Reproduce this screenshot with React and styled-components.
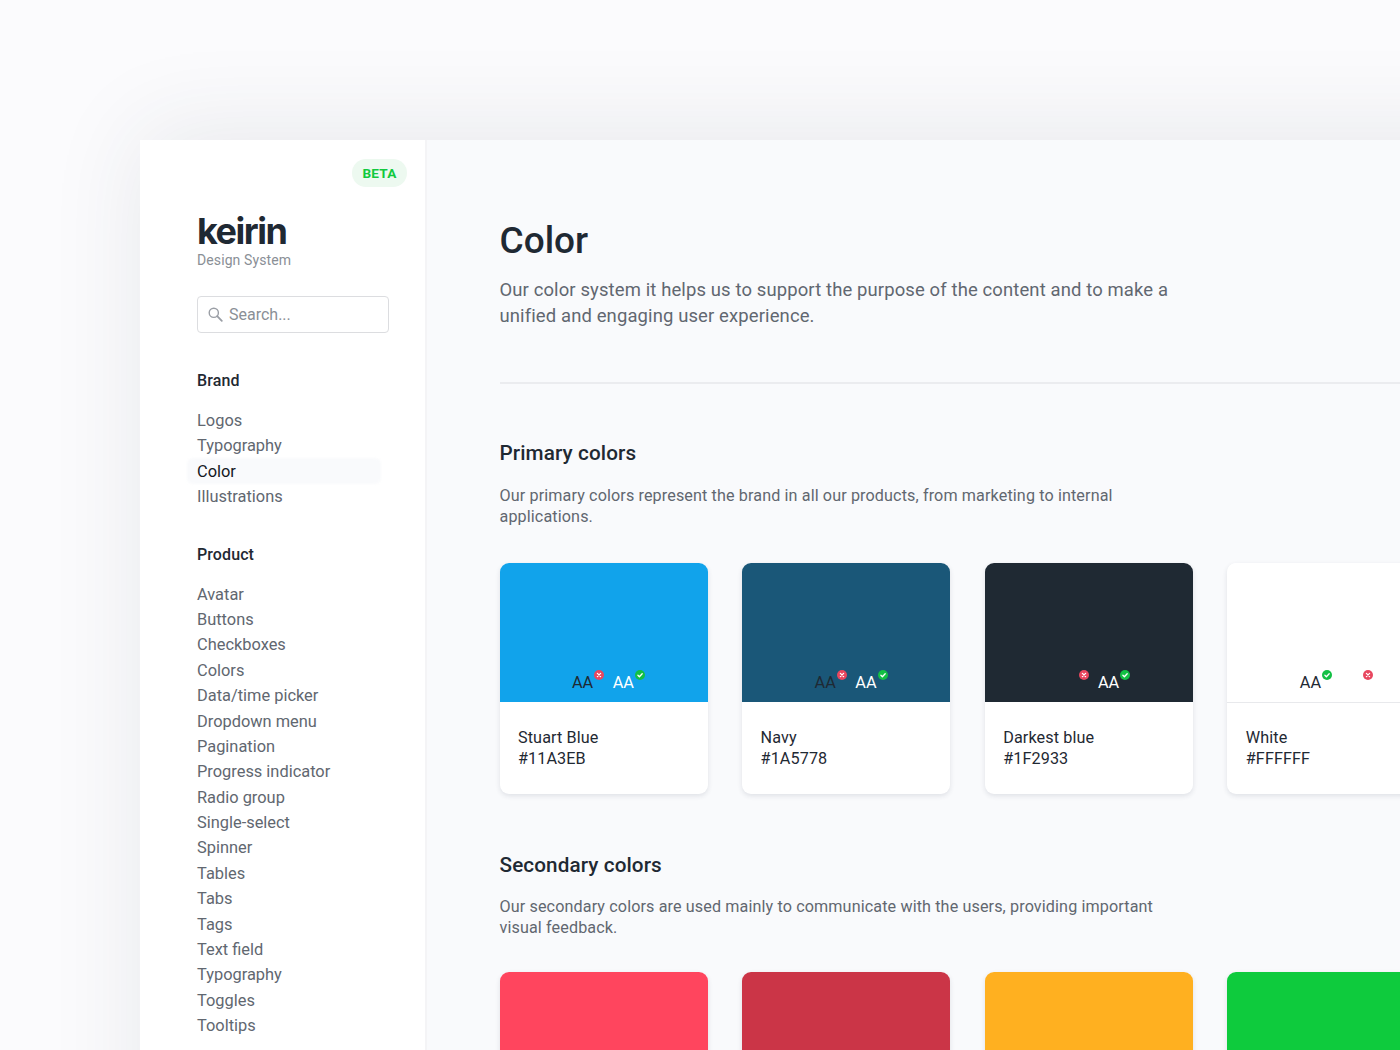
import React from "react";
import styled, { createGlobalStyle } from "styled-components";

const Global = createGlobalStyle`
  html, body { margin: 0; padding: 0; height: 100%; overflow: hidden; background: #fbfbfd; }
  * { box-sizing: border-box; }
  body { font-family: Roboto, "Liberation Sans", sans-serif; -webkit-font-smoothing: antialiased; }
`;
const Page = styled.div`
  width: 1400px; height: 1050px; overflow: hidden; padding: 140px 0 0 140px; background: #fbfbfd;
`;
const Shell = styled.div`
  display: flex; width: 1400px; height: 1200px; background: #f9fafc;
  box-shadow: 0 -10px 90px rgba(40, 50, 70, 0.09);
`;
const Sidebar = styled.aside`
  flex: 0 0 287px; display: flex; flex-direction: column; background: #fff;
  border-right: 2px solid #f4f4f6; padding: 19px 18px 0 57px;
`;
const Beta = styled.span`
  align-self: flex-end; width: 55px; height: 28px; border-radius: 14px;
  background: #edf9f0; color: #12c93f; font-size: 13.6px; font-weight: 700; letter-spacing: 0.2px;
  display: flex; align-items: center; justify-content: center;
`;
const Logo = styled.div`
  margin-top: 24px; font-family: Inter, sans-serif; font-size: 36px; line-height: 40px; font-weight: 700;
  color: #1f2933; letter-spacing: -1.5px;
`;
const Tagline = styled.div`
  font-size: 14px; line-height: 18px; color: #8a8f96; letter-spacing: 0.1px;
`;
const Search = styled.div`
  margin-top: 27px; width: 191.5px; height: 37px; flex: none; border: 1px solid #dcdde0; border-radius: 4px; background: #fff;
  display: flex; align-items: center; gap: 6px; padding-left: 10px;
  color: #8a8f96; font-size: 16px; letter-spacing: 0;
`;
const SectionTitle = styled.div`
  font-size: 16px; line-height: 20px; font-weight: 500; color: #1f2933; letter-spacing: 0.1px;
  margin-top: ${(p) => p.$top}px; margin-bottom: 17px;
`;
const NavList = styled.div`
  display: flex; flex-direction: column;
`;
const NavItem = styled.div`
  position: relative; flex: none; height: 25.4px; line-height: 25.4px; font-size: 16.4px; letter-spacing: 0;
  color: ${(p) => (p.$active ? "#14191f" : "#616770")};
  ${(p) => p.$active && `
    &::before {
      content: ""; position: absolute; left: -10px; top: -1px; width: 194px; height: 26px;
      background: #f9fafc; border-radius: 6px; z-index: 0; filter: blur(1px);
    }
  `}
`;
const NavLabel = styled.span`
  position: relative;
`;
const Main = styled.main`
  flex: 1; padding: 78px 0 0 72.5px;
`;
const Title = styled.h1`
  margin: 0; font-size: 37px; line-height: 46px; font-weight: 500; color: #1f2933;
`;
const Lead = styled.p`
  margin: 14px 0 0; width: 690px; font-size: 18.45px; line-height: 25.5px; color: #616770; letter-spacing: 0.13px;
`;
const Divider = styled.div`
  height: 2px; background: #ebecef; margin-top: 53px;
`;
const H2 = styled.h2`
  margin: ${(p) => p.$top}px 0 0; font-size: 20.7px; line-height: 28px; font-weight: 500; color: #1f2933; letter-spacing: 0.1px;
`;
const Desc = styled.p`
  margin: ${(p) => p.$top}px 0 0; width: 680px; font-size: 16.15px; line-height: 21px; color: #616770; letter-spacing: 0.12px;
`;
const Cards = styled.div`
  display: flex; gap: 34.6px; margin-top: ${(p) => p.$top}px;
`;
const Card = styled.div`
  flex: 0 0 208px; height: 231px; border-radius: 9px; background: #fff; overflow: hidden;
  box-shadow: 0 2px 5px rgba(40, 50, 70, 0.12);
`;
const Swatch = styled.div`
  display: flex; align-items: flex-end; padding: 0 0 11px 72.5px; height: 139px; background: ${(p) => p.$c};
  ${(p) => p.$line && "box-shadow: 0 1px 0 #e8e9ec;"}
`;
const Contrast = styled.div`
  flex: 0 0 40.7px; display: flex; align-items: flex-start;
  font-size: 16.3px; line-height: 17px; color: ${(p) => p.$c};
`;
const Dot = styled.svg`
  flex: none; width: 10px; height: 10px; margin: -4px 0 0 1px;
`;
const Info = styled.div`
  padding: 25px 0 0 18.5px; font-size: 16.2px; line-height: 21px; color: #1f2933; letter-spacing: 0.1px;
`;

const Cross = () => (
  <Dot viewBox="0 0 10 10">
    <circle cx="5" cy="5" r="5" fill="#e8475f" />
    <path d="M3.4 3.4l3.2 3.2M6.6 3.4L3.4 6.6" stroke="#fff" strokeWidth="1.3" strokeLinecap="round" />
  </Dot>
);
const Check = () => (
  <Dot viewBox="0 0 10 10">
    <circle cx="5" cy="5" r="5" fill="#12c044" />
    <path d="M2.9 5.2l1.5 1.5 2.8-3" stroke="#fff" strokeWidth="1.3" fill="none" strokeLinecap="round" strokeLinejoin="round" />
  </Dot>
);

const DARK = "#1f2933";
const WHITE = "#ffffff";

const brand = ["Logos", "Typography", "Color", "Illustrations"];
const product = ["Avatar", "Buttons", "Checkboxes", "Colors", "Data/time picker", "Dropdown menu", "Pagination", "Progress indicator", "Radio group", "Single-select", "Spinner", "Tables", "Tabs", "Tags", "Text field", "Typography", "Toggles", "Tooltips"];
const primary = [
  { name: "Stuart Blue", hex: "#11A3EB", darkOk: false, whiteOk: true },
  { name: "Navy", hex: "#1A5778", darkOk: false, whiteOk: true },
  { name: "Darkest blue", hex: "#1F2933", darkOk: false, whiteOk: true },
  { name: "White", hex: "#FFFFFF", darkOk: true, whiteOk: false, line: true },
];
const secondary = ["#ff455e", "#cb3547", "#ffb020", "#0ecb3d"];

export default function App() {
  return (
    <Page>
      <Global />
      <Shell>
        <Sidebar>
          <Beta>BETA</Beta>
          <Logo>keirin</Logo>
          <Tagline>Design System</Tagline>
          <Search>
            <svg width="15" height="15" viewBox="0 0 15 15" fill="none" stroke="#9a9ea5" strokeWidth="1.4">
              <circle cx="5.8" cy="5.8" r="4.6" />
              <path d="M9.2 9.2l4.6 4.6" strokeLinecap="round" strokeWidth="1.8" />
            </svg>
            Search...
          </Search>
          <SectionTitle $top={38}>Brand</SectionTitle>
          <NavList>
            {brand.map((b) => (
              <NavItem key={b} $active={b === "Color"}><NavLabel>{b}</NavLabel></NavItem>
            ))}
          </NavList>
          <SectionTitle $top={35}>Product</SectionTitle>
          <NavList>
            {product.map((b) => (
              <NavItem key={b}><NavLabel>{b}</NavLabel></NavItem>
            ))}
          </NavList>
        </Sidebar>
        <Main>
          <Title>Color</Title>
          <Lead>Our color system it helps us to support the purpose of the content and to make a unified and engaging user experience.</Lead>
          <Divider />
          <H2 $top={55}>Primary colors</H2>
          <Desc $top={18}>Our primary colors represent the brand in all our products, from marketing to internal applications.</Desc>
          <Cards $top={36}>
            {primary.map((c) => (
              <Card key={c.name}>
                <Swatch $c={c.hex} $line={c.line}>
                  <Contrast $c={DARK}>AA{c.darkOk ? <Check /> : <Cross />}</Contrast>
                  <Contrast $c={WHITE}>AA{c.whiteOk ? <Check /> : <Cross />}</Contrast>
                </Swatch>
                <Info>{c.name}<br />{c.hex}</Info>
              </Card>
            ))}
          </Cards>
          <H2 $top={57}>Secondary colors</H2>
          <Desc $top={17}>Our secondary colors are used mainly to communicate with the users, providing important visual feedback.</Desc>
          <Cards $top={34}>
            {secondary.map((c) => (
              <Card key={c}><Swatch $c={c} /></Card>
            ))}
          </Cards>
        </Main>
      </Shell>
    </Page>
  );
}
